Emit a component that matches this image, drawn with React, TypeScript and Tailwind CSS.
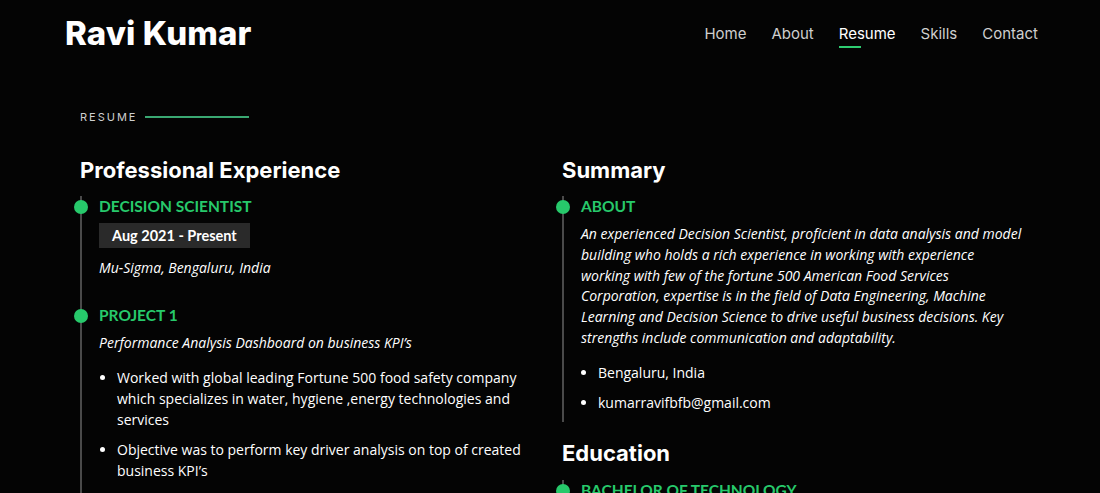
import type { ReactNode } from 'react'

const nav = ['Home', 'About', 'Resume', 'Skills', 'Contact']

function Item({ title, children }: { title: string; children?: ReactNode }) {
  return (
    <div className="relative border-l-2 border-[#4a4a4a] pl-[17px]">
      <span className="absolute -left-[8px] top-[4px] h-[14px] w-[14px] rounded-full bg-[#27c96b]" />
      <h4 className="text-[15.5px] font-bold uppercase leading-[20px] text-[#27c96b] [font-family:Lato,'Open_Sans',sans-serif]">
        {title}
      </h4>
      {children}
    </div>
  )
}

export default function App() {
  return (
    <div className="min-h-screen bg-[#040404] text-white [font-family:'Open_Sans',sans-serif]">
      {/* Шапка */}
      <header className="flex h-[66px] items-center justify-between pl-[65px] pr-[62px]">
        <h1 className="text-[33px] font-extrabold leading-none tracking-[0.1px] [font-family:Inter,sans-serif]">Ravi Kumar</h1>
        <nav className="mt-[3px] flex items-center gap-[25px] text-[15px] [font-family:Inter,sans-serif]">
          {nav.map((n) => (
            <a key={n} className={`relative ${n === 'Resume' ? 'text-white' : 'text-[#cfcfcf]'}`}>
              {n}
              {n === 'Resume' && <span className="absolute left-0 top-[23px] h-[2px] w-[22px] bg-[#2ecc71]" />}
            </a>
          ))}
        </nav>
      </header>

      <section className="mx-auto w-[940px] pt-[44px]">
        <div className="flex h-[14px] items-center gap-[8px]">
          <span className="text-[11px] uppercase tracking-[2px] text-[#cfcfcf] [font-family:Inter,sans-serif]">Resume</span>
          <span className="h-[2px] w-[104px] bg-[#3aa872]" />
        </div>

        <div className="grid grid-cols-2 gap-x-[24px]">
          {/* Опыт */}
          <div>
            <h3 className="mt-[31px] mb-[11px] text-[22px] font-bold leading-[30px] [font-family:Inter,sans-serif]">
              Professional Experience
            </h3>
            <div className="pb-[27px] border-l-2 border-[#4a4a4a]">
              <div className="-ml-[2px]">
                <Item title="Decision Scientist">
                  <div className="mt-[7px] inline-block bg-[#2a2a2a] px-[13px] py-[3px] text-[14.5px] font-bold leading-[19px] [font-family:Lato,sans-serif]">
                    Aug 2021 - Present
                  </div>
                  <p className="mt-[10px] text-[14px] italic leading-[20px]">Mu-Sigma, Bengaluru, India</p>
                </Item>
              </div>
            </div>
            <Item title="Project 1">
              <p className="mt-[8px] text-[14px] italic leading-[20px]">Performance Analysis Dashboard on business KPI’s</p>
              <ul className="mt-[14px] list-disc pb-[20px] pl-[18px] text-[14px] leading-[21px]">
                <li className="mb-[9px]">
                  Worked with global leading Fortune 500 food safety company which specializes in water, hygiene ,energy
                  technologies and services
                </li>
                <li>Objective was to perform key driver analysis on top of created business KPI’s</li>
              </ul>
            </Item>
          </div>

          {/* Резюме */}
          <div>
            <h3 className="mt-[31px] mb-[11px] text-[22px] font-bold leading-[30px] [font-family:Inter,sans-serif]">Summary</h3>
            <div className="pb-[9px] border-l-2 border-[#4a4a4a]">
              <div className="-ml-[2px]">
                <Item title="About">
                  <p className="mt-[8px] -mr-[3px] text-[14px] italic leading-[20.8px]">
                    An experienced Decision Scientist, proficient in data analysis and model building who holds a rich
                    experience in working with experience working with few of the fortune 500 American Food Services
                    Corporation, expertise is in the field of Data Engineering, Machine Learning and Decision Science to
                    drive useful business decisions. Key strengths include communication and adaptability.
                  </p>
                  <ul className="mt-[14px] list-disc pl-[17px] text-[14px] leading-[20px]">
                    <li className="mb-[10px]">Bengaluru, India</li>
                    <li>kumarravifbfb@gmail.com</li>
                  </ul>
                </Item>
              </div>
            </div>
            <h3 className="mt-[16px] mb-[12px] text-[22px] font-bold leading-[30px] [font-family:Inter,sans-serif]">Education</h3>
            <Item title="Bachelor of Technology">
              <div className="h-[20px]" />
            </Item>
          </div>
        </div>
      </section>
    </div>
  )
}
